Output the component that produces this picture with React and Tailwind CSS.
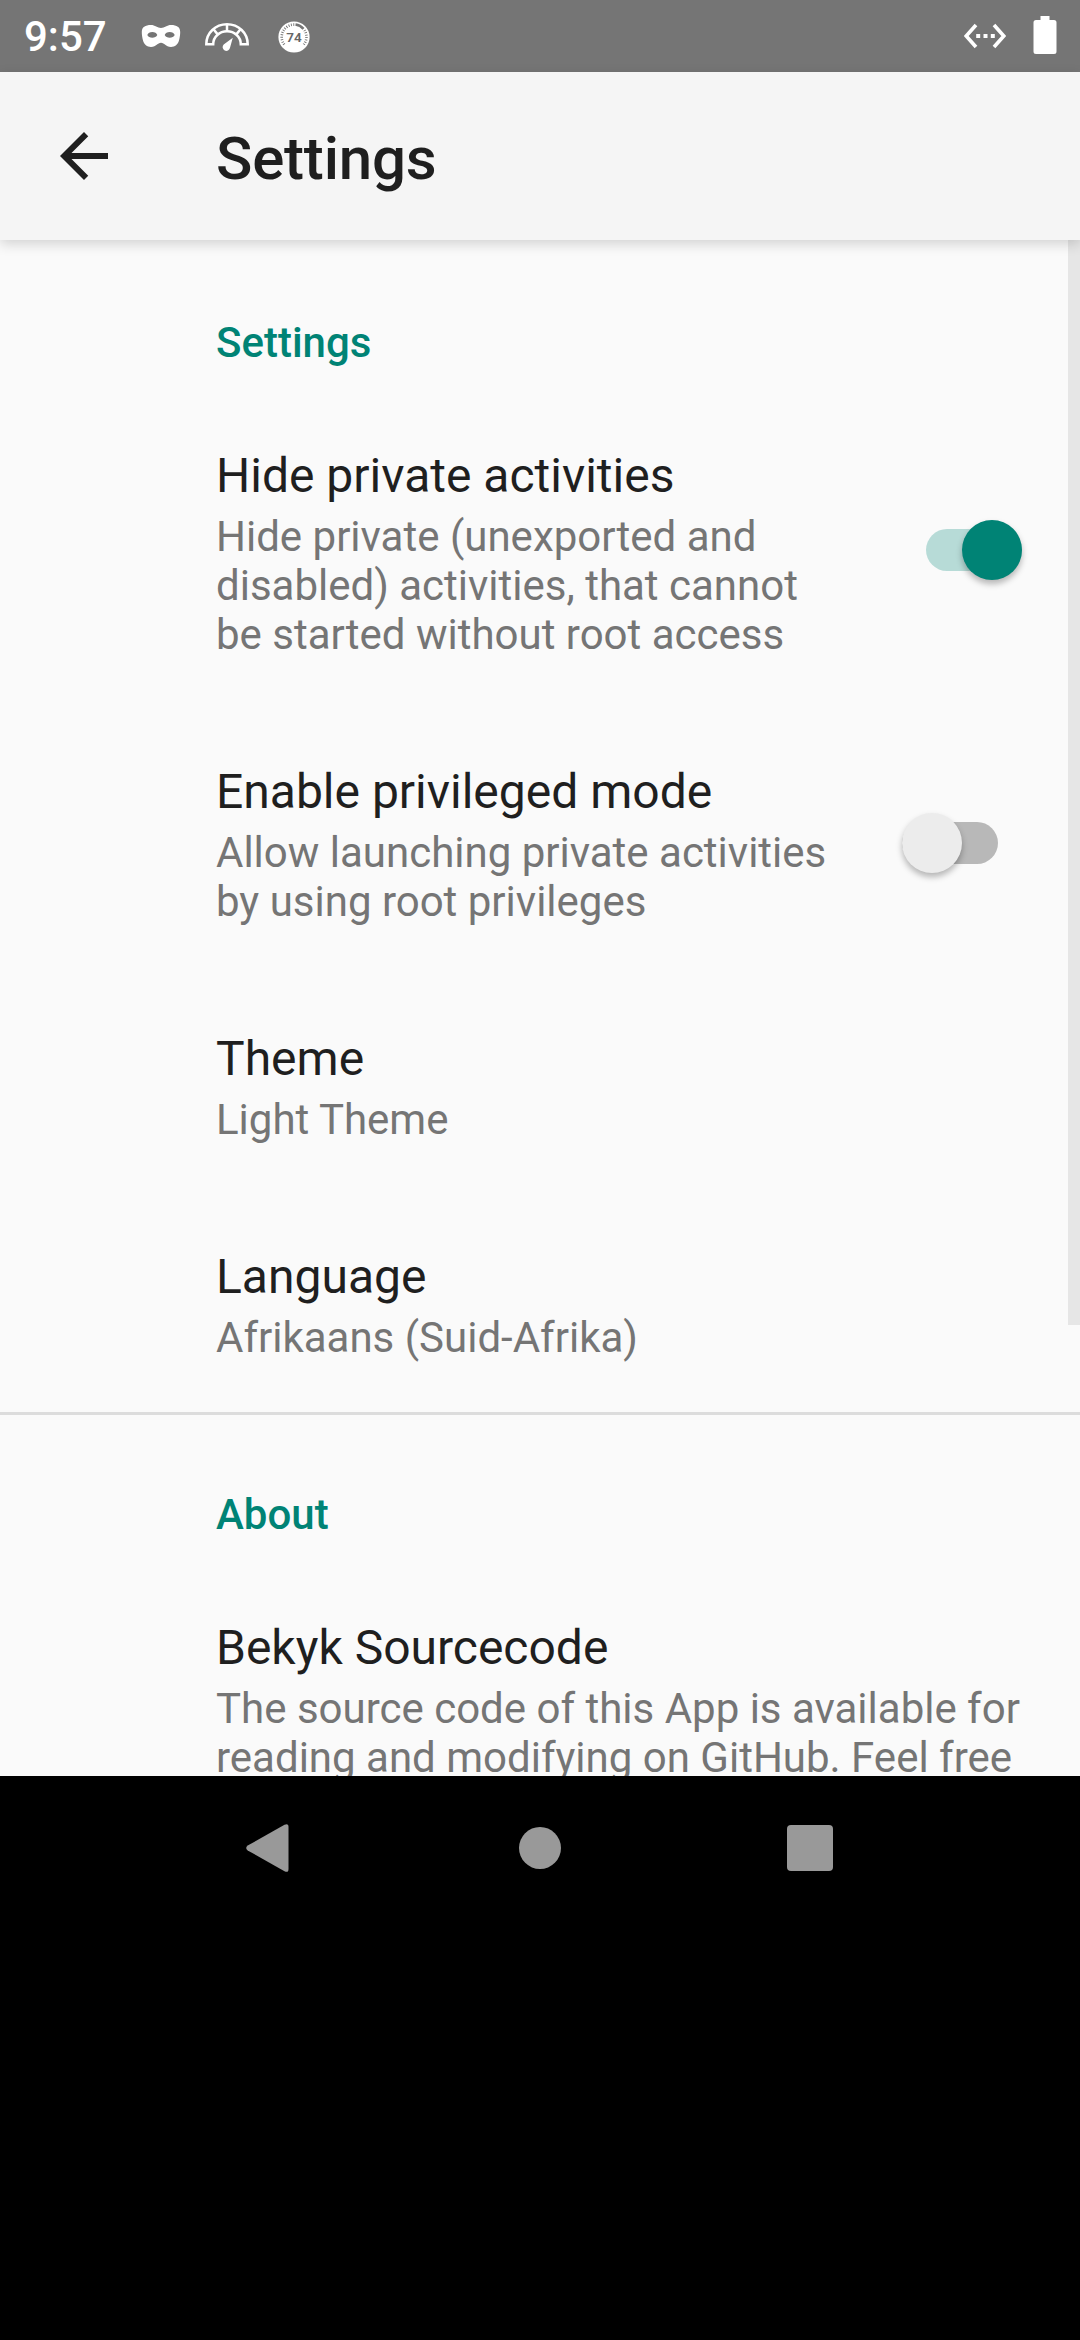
function MaskIcon() {
  return (
    <svg className="h-[24px] w-[40px]" viewBox="0 0 40 24">
      <path
        fill="#fff"
        fillRule="evenodd"
        d="M10 1C14 1 16.500 3.900 20 3.900S26 1 30 1C35.800 1 39.200 3 39.200 8C39.200 10.500 38.800 13.500 38 16.500C36.800 20.500 34 22.900 30 22.900C24.500 22.900 23.500 18.800 20 18.800S15.500 22.900 10 22.900C6 22.900 3.200 20.500 2 16.500C1.200 13.500 0.800 10.500 0.800 8C0.800 3 4.200 1 10 1ZM11.300 7.900C8.800 7.900 7 9.200 6.300 10.900C7.200 12.700 9 13.700 11.300 13.700S15.400 12.700 16.300 10.900C15.600 9.200 13.800 7.900 11.300 7.900ZM28.700 7.900C26.200 7.900 24.400 9.200 23.700 10.900C24.600 12.700 26.400 13.700 28.700 13.700S32.800 12.700 33.700 10.900C33 9.200 31.200 7.900 28.700 7.900Z"
      />
    </svg>
  );
}

function GaugeIcon() {
  return (
    <svg className="h-[30px] w-[46px]" viewBox="0 0 46 30" fill="none" stroke="#fff">
      <path strokeWidth="2.500" d="M2.300 22.200C2.300 10.800 11.400 2.300 23 2.300S43.700 10.800 43.700 22.200H36.800C36.800 14.800 30.500 9.300 23 9.300S9.200 14.800 9.200 22.200Z" />
      <path strokeWidth="2.500" d="M23 2V9M9.300 7L13.700 12.400M36.700 7L32.300 12.400" />
      <path fill="#fff" stroke="none" d="M28.800 15.800L26 25.800A3.700 3.700 0 1 1 19.700 22.600Z" />
    </svg>
  );
}

function BadgeIcon() {
  return (
    <svg className="size-[32px]" viewBox="0 0 32 32">
      <circle cx="16" cy="16" r="15.600" fill="#fff" />
      <path d="M6.200 23.500A12.400 12.400 0 0 1 17.500 3.700" fill="none" stroke="#757575" strokeWidth="2.600" strokeDasharray="0.9 1.500" />
      <path d="M17.500 3.500A12.500 12.500 0 0 1 25.500 7.800" fill="none" stroke="#757575" strokeWidth="2.600" />
      <path d="M26.500 9.200A12.400 12.400 0 0 1 25.800 23.500" fill="none" stroke="#757575" strokeWidth="2.600" strokeDasharray="0.9 1.500" />
      <text x="16" y="21" textAnchor="middle" fill="#666" fontFamily="Roboto, sans-serif" fontWeight="600" fontSize="13.500">74</text>
    </svg>
  );
}

function StatusBar() {
  return (
    <header className="flex h-[72px] shrink-0 items-center bg-[#757575] pl-[24px] pr-[23px] text-white">
      <span className="w-[117px] pt-[2px] text-[42px] leading-[48px] font-medium">9:57</span>
      <MaskIcon />
      <div className="ml-[23px] pt-[1px]"><GaugeIcon /></div>
      <div className="ml-[28px] pt-[1px]"><BadgeIcon /></div>
      <svg className="ml-auto h-[26px] w-[44px]" viewBox="0 0 44 26">
        <path d="M13 2L3.200 13L13 24M31 2L40.800 13L31 24" fill="none" stroke="#fff" strokeWidth="3.600" />
        <path d="M13.200 11h4v4h-4zM20.500 11h4v4h-4zM27.800 11h4v4h-4z" fill="#fff" />
      </svg>
      <svg className="-mt-[2px] ml-[26px] h-[40px] w-[24px]" viewBox="0 0 24 40">
        <path d="M7.500 1h9v4h4.500a2.500 2.500 0 0 1 2.500 2.500v29a2.500 2.500 0 0 1-2.500 2.500h-18a2.500 2.500 0 0 1-2.500-2.500v-29a2.500 2.500 0 0 1 2.500-2.500h4.500z" fill="#fff" />
      </svg>
    </header>
  );
}

function Toolbar() {
  return (
    <div className="relative z-10 flex h-[168px] shrink-0 items-center bg-[#f5f5f5] pl-[48px] shadow-[0_4px_12px_rgba(0,0,0,0.16)]">
      <svg className="size-[72px]" viewBox="0 0 24 24">
        <path d="M20 11H7.830l5.590-5.590L12 4l-8 8 8 8 1.410-1.410L7.830 13H20v-2z" fill="#1f1f1f" />
      </svg>
      <h1 className="ml-[96px] pt-[6px] text-[60px] leading-[70px] font-medium tracking-[-0.2px] text-[#1f1f1f]">Settings</h1>
    </div>
  );
}

function Switch({ on }) {
  return (
    <div className={on ? "-mt-[2px] flex h-[60px] w-[120px] items-center justify-end" : "flex h-[60px] w-[120px] items-center"}>
      <div className={on ? "flex h-[42px] w-[96px] items-center justify-end rounded-full bg-[#b7dbd7]" : "flex h-[42px] w-[96px] items-center rounded-full bg-[#b8b8b8]"}>
        <div className={on ? "size-[60px] shrink-0 rounded-full bg-[#008375] shadow-[0_4px_6px_rgba(0,0,0,0.28)]" : "size-[60px] shrink-0 rounded-full bg-[#ececec] shadow-[0_4px_6px_rgba(0,0,0,0.28)]"} />
      </div>
    </div>
  );
}

function Category({ children }) {
  return <h2 className="h-[153px] pt-[78px] pl-[216px] text-[42px] leading-[49px] font-medium text-[#008375]">{children}</h2>;
}

function Preference({ title, lines, control }) {
  return (
    <div className="flex items-center pr-[58px] pl-[216px]">
      <div className="min-w-0 flex-1 pt-[55px] pb-[50px]">
        <div className="text-[48px] leading-[56px] text-[#1f1f1f]">{title}</div>
        <div className="mt-[8px] text-[42px] leading-[49px] whitespace-nowrap text-[#757575]">
          {lines.map((line) => <div key={line}>{line}</div>)}
        </div>
      </div>
      {control}
    </div>
  );
}

function NavigationBar() {
  return (
    <nav className="grid h-[144px] shrink-0 grid-cols-3 items-center justify-items-center px-[135px]">
      <svg className="size-[54px]" viewBox="0 0 54 54">
        <path d="M4.700 24.600L41.500 3.800Q45.500 1.800 45.500 6V48Q45.500 52.200 41.500 50.200L4.700 29.400Q1.700 27 4.700 24.600Z" fill="#999" />
      </svg>
      <div className="size-[42px] rounded-full bg-[#999]" />
      <div className="size-[46px] rounded-[4px] bg-[#999]" />
    </nav>
  );
}

export default function App() {
  return (
    <div className="flex h-[2340px] w-[1080px] flex-col overflow-hidden bg-black font-[Roboto,sans-serif]">
      <StatusBar />
      <Toolbar />
      <main className="relative h-[1536px] shrink-0 overflow-hidden bg-[#fafafa]">
        <Category>Settings</Category>
        <Preference
          title="Hide private activities"
          lines={["Hide private (unexported and", "disabled) activities, that cannot", "be started without root access"]}
          control={<Switch on />}
        />
        <Preference
          title="Enable privileged mode"
          lines={["Allow launching private activities", "by using root privileges"]}
          control={<Switch />}
        />
        <Preference title="Theme" lines={["Light Theme"]} />
        <Preference title="Language" lines={["Afrikaans (Suid-Afrika)"]} />
        <div className="-mb-[3px] h-[3px] bg-[#dcdcdc]" />
        <Category>About</Category>
        <Preference
          title="Bekyk Sourcecode"
          lines={["The source code of this App is available for", "reading and modifying on GitHub. Feel free"]}
        />
        <div className="absolute top-0 right-0 h-[1085px] w-[12px] bg-[#e6e6e6]" />
      </main>
      <NavigationBar />
    </div>
  );
}
